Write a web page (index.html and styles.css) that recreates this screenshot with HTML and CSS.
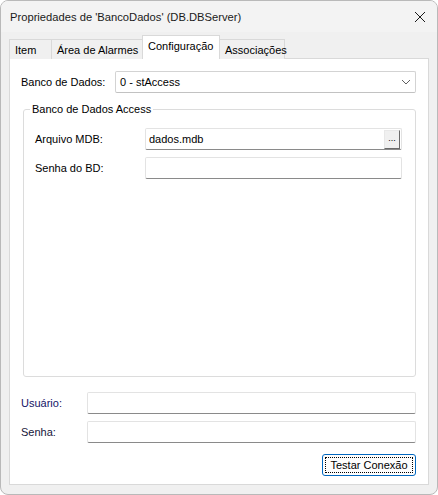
FILE: index.html
```html
<!DOCTYPE html>
<html>
<head>
<meta charset="utf-8">
<link rel="stylesheet" href="styles.css">
</head>
<body>
<div class="window">
  <div class="titlebar">
    <span class="title">Propriedades de 'BancoDados' (DB.DBServer)</span>
    <svg class="close" width="12" height="12" viewBox="0 0 12 12"><path d="M1 1L11 11M11 1L1 11" stroke="#1a1a1a" stroke-width="1" fill="none"/></svg>
  </div>
  <div class="tabs">
    <div class="tab t1">Item</div>
    <div class="tab t2">Área de Alarmes</div>
    <div class="tab t3 active">Configuração</div>
    <div class="tab t4">Associações</div>
  </div>
  <div class="panel">
    <div class="row first">
      <span class="label lbl-db">Banco de Dados:</span>
      <div class="combo"><span>0 - stAccess</span>
        <svg width="10" height="6" viewBox="0 0 10 6"><path d="M1 1L5 5L9 1" stroke="#606060" stroke-width="1" fill="none"/></svg>
      </div>
    </div>
    <fieldset class="group">
      <legend>Banco de Dados Access</legend>
      <div class="row">
        <span class="label lbl-g">Arquivo MDB:</span>
        <div class="input wide mdb"><span>dados.mdb</span><div class="browse">...</div></div>
      </div>
      <div class="row gap">
        <span class="label lbl-g">Senha do BD:</span>
        <div class="input wide"></div>
      </div>
    </fieldset>
    <div class="row user">
      <span class="label lbl-u navy">Usuário:</span>
      <div class="input full"></div>
    </div>
    <div class="row gap">
      <span class="label lbl-u dark">Senha:</span>
      <div class="input full"></div>
    </div>
    <div class="btnrow">
      <div class="button"><span class="focus">Testar Conexão</span></div>
    </div>
  </div>
</div>
</body>
</html>
```
FILE: styles.css
```css
html, body { margin: 0; padding: 0; background: #ffffff; }
body { font-family: "Liberation Sans", Arial, sans-serif; font-size: 11px; color: #000; }
.window {
  width: 438px; height: 495px; box-sizing: border-box;
  border: 1px solid #b9b9b9; border-radius: 8px;
  background: #f0f0f0; overflow: hidden;
  display: flex; flex-direction: column;
}
.titlebar {
  height: 31px; display: flex; align-items: center; justify-content: space-between;
  padding: 0 10px 0 9px; background: #f3f3f3; flex: none;
}
.title { font-size: 11.2px; color: #1a1a1a; }
.close { margin-right: 1px; }
.tabs {
  display: flex; align-items: flex-end; height: 24px; margin: 3px 0 -1px 8px;
  position: relative; z-index: 1;
}
.tab {
  height: 20px; box-sizing: border-box; border: 1px solid #d9d9d9; border-bottom: none;
  background: #f0f0f0; display: flex; align-items: center; padding-left: 5px;
  color: #000;
}
.t1 { width: 42px; border-right: none; }
.t2 { width: 91px; border-right: none; }
.t3 { width: 78px; }
.t4 { width: 65px; border-left: none; }
.tab.active { height: 24px; background: #ffffff; padding-bottom: 3px; }
.panel {
  margin: 0 8px 0 8px; height: 427px; box-sizing: border-box;
  border: 1px solid #d9d9d9; background: #ffffff;
  padding: 12px 12px 0 11px;
}
.row { display: flex; align-items: center; height: 22px; }
.label { flex: none; }
.lbl-db { width: 94px; }
.lbl-g { width: 110px; }
.lbl-u { width: 66px; }
.navy { color: #141466; }
.dark { color: #16163a; }
.combo {
  flex: 1; height: 22px; box-sizing: border-box; border: 1px solid #d3d3d3; border-bottom-color: #c2c2c2;
  border-radius: 2px; display: flex; align-items: center; justify-content: space-between;
  padding: 0 4px 0 4px; background: #fff;
}
.group {
  margin: 10px 0 0 2px; padding: 12px 13px 0 11px; height: 274px; box-sizing: border-box;
  border: 1px solid #dcdcdc; border-radius: 3px;
}
.group legend { padding: 0 2px; margin-left: -5px; line-height: 13px; }
.input {
  flex: 1; height: 22px; box-sizing: border-box; background: #fff;
  border: 1px solid #e3e3e3; border-bottom: 1px solid #8a8a8a; border-radius: 2px;
  display: flex; align-items: center;
}
.mdb { padding-left: 3px; justify-content: space-between; padding-right: 1px; }
.browse {
  width: 16px; height: 19px; box-sizing: border-box; background: #f0f0f0;
  border: 1px solid #e8e8e8; border-right-color: #6a6a6a; border-bottom-color: #6a6a6a;
  font-size: 9px; text-align: center; line-height: 14px;
}
.gap { margin-top: 7px; }
.user { margin-top: 15px; }
.btnrow { display: flex; justify-content: flex-end; margin-top: 11px; }
.button {
  width: 94px; height: 22px; box-sizing: border-box; border: 1px solid #0067c0; border-radius: 3px;
  background: #fdfdfd; padding: 2px; display: flex;
}
.focus {
  flex: 1; border: 1px dotted #000; display: flex; align-items: center; justify-content: center;
  font-size: 11px;
}
```
